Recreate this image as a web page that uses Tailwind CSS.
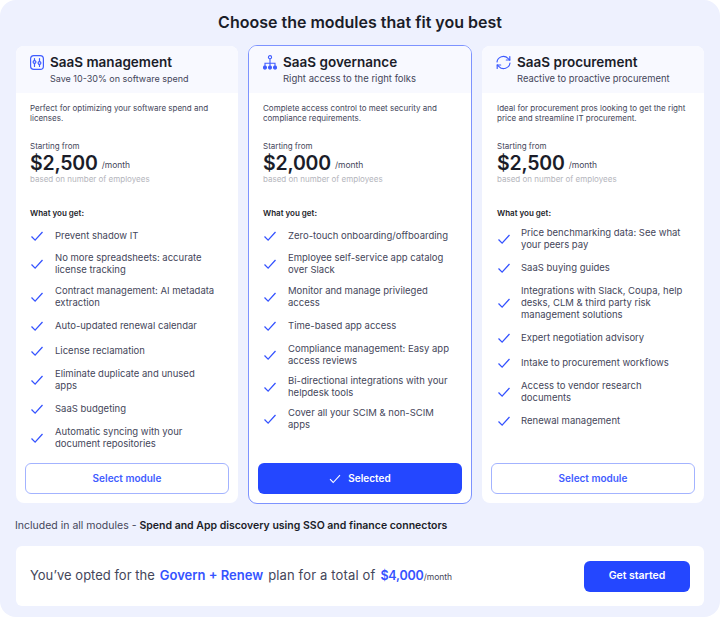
<!DOCTYPE html>
<html lang="en">
<head>
    <meta charset="UTF-8">
    <title>Choose the modules</title>
    <script src="https://cdn.jsdelivr.net/npm/@tailwindcss/browser@4"></script>
</head>
<body class="bg-white font-['Inter',sans-serif] text-[#1b1d29]">
    <div class="w-[720px] h-[617px] bg-[#eef1fe] rounded-[16px] px-4 overflow-hidden">
        <h1 class="h-[46px] pt-[12px] text-center text-[16px] leading-[20px] font-semibold">Choose the modules that fit you best</h1>

        <div class="grid grid-cols-[222px_222px_222px] gap-[11px] h-[457px]">
            <!-- SaaS management -->
            <div class="flex flex-col bg-white rounded-[8px] overflow-hidden">
                <div class="h-[47px] bg-[#f8f9ff] pl-[14px] pt-[9px]">
                    <div class="flex items-center gap-[6px] h-[15px]">
                        <svg class="w-[14px] h-[15px] shrink-0" viewBox="0 0 14 15" fill="none" stroke="#3f5cff" stroke-width="1.2" stroke-linecap="round">
                            <rect x="0.6" y="0.6" width="12.8" height="13.8" rx="3.2"/>
                            <path d="M4.5 3.5v2M4.5 8.5v3M9.5 3.5v3M9.5 9.5v2"/>
                            <circle cx="4.5" cy="7" r="1.4"/>
                            <circle cx="9.5" cy="8" r="1.4"/>
                        </svg>
                        <span class="text-[13.5px] leading-[15px] font-semibold">SaaS management</span>
                    </div>
                    <p class="ml-[20px] mt-[3px] text-[9px] leading-[12px] text-[#44465a]">Save 10-30% on software spend</p>
                </div>
                <div class="flex flex-col flex-1 px-[14px] pb-[9px]">
                    <p class="mt-[10px] text-[8px] leading-[10px] text-[#44465a]">Perfect for optimizing your software spend and licenses.</p>
                    <p class="mt-[18px] text-[8px] leading-[10px] text-[#44465a]">Starting from</p>
                    <p class="flex items-center gap-[4px] h-[24px] leading-[24px]"><span class="text-[19.5px] font-semibold tracking-[-0.2px]">$2,500</span><span class="pt-[4px] text-[8.5px] text-[#44465a]">/month</span></p>
                    <p class="-mt-[1px] text-[8px] leading-[10px] text-[#b4b5bc]">based on number of employees</p>
                    <p class="mt-[24px] text-[8px] leading-[10px] font-semibold">What you get:</p>
                    <ul class="mt-[9px] flex flex-col gap-[8.4px] text-[9.5px] leading-[12px] text-[#44465a]">
                        <li class="flex items-center gap-[11px] min-h-[17px]"><svg class="w-[14px] h-[12px] shrink-0" viewBox="0 0 14 12" fill="none" stroke="#3553ff" stroke-width="1.3"><path d="M1.5 6.5l3.6 3.6L12.5 2"/></svg><span>Prevent shadow IT</span></li>
                        <li class="flex items-center gap-[11px] min-h-[17px]"><svg class="w-[14px] h-[12px] shrink-0" viewBox="0 0 14 12" fill="none" stroke="#3553ff" stroke-width="1.3"><path d="M1.5 6.5l3.6 3.6L12.5 2"/></svg><span>No more spreadsheets: accurate license tracking</span></li>
                        <li class="flex items-center gap-[11px] min-h-[17px]"><svg class="w-[14px] h-[12px] shrink-0" viewBox="0 0 14 12" fill="none" stroke="#3553ff" stroke-width="1.3"><path d="M1.5 6.5l3.6 3.6L12.5 2"/></svg><span>Contract management: AI metadata extraction</span></li>
                        <li class="flex items-center gap-[11px] min-h-[17px]"><svg class="w-[14px] h-[12px] shrink-0" viewBox="0 0 14 12" fill="none" stroke="#3553ff" stroke-width="1.3"><path d="M1.5 6.5l3.6 3.6L12.5 2"/></svg><span>Auto-updated renewal calendar</span></li>
                        <li class="flex items-center gap-[11px] min-h-[17px]"><svg class="w-[14px] h-[12px] shrink-0" viewBox="0 0 14 12" fill="none" stroke="#3553ff" stroke-width="1.3"><path d="M1.5 6.5l3.6 3.6L12.5 2"/></svg><span>License reclamation</span></li>
                        <li class="flex items-center gap-[11px] min-h-[17px]"><svg class="w-[14px] h-[12px] shrink-0" viewBox="0 0 14 12" fill="none" stroke="#3553ff" stroke-width="1.3"><path d="M1.5 6.5l3.6 3.6L12.5 2"/></svg><span>Eliminate duplicate and unused<br>apps</span></li>
                        <li class="flex items-center gap-[11px] min-h-[17px]"><svg class="w-[14px] h-[12px] shrink-0" viewBox="0 0 14 12" fill="none" stroke="#3553ff" stroke-width="1.3"><path d="M1.5 6.5l3.6 3.6L12.5 2"/></svg><span>SaaS budgeting</span></li>
                        <li class="flex items-center gap-[11px] min-h-[17px]"><svg class="w-[14px] h-[12px] shrink-0" viewBox="0 0 14 12" fill="none" stroke="#3553ff" stroke-width="1.3"><path d="M1.5 6.5l3.6 3.6L12.5 2"/></svg><span>Automatic syncing with your document repositories</span></li>
                    </ul>
                    <button class="mt-auto h-[31px] -mx-[5px] rounded-[6px] border-[1.5px] border-[#a3b3ff] bg-white text-[10px] font-semibold text-[#3f5cff]">Select module</button>
                </div>
            </div>

            <!-- SaaS governance (selected) -->
            <div class="flex flex-col bg-white rounded-[9px] overflow-hidden border border-[#7d93ff] -m-px">
                <div class="h-[47px] bg-[#f8f9ff] pl-[14px] pt-[9px]">
                    <div class="flex items-center gap-[6px] h-[15px]">
                        <svg class="w-[14px] h-[15px] shrink-0" viewBox="0 0 14 15" fill="none" stroke="#3f5cff" stroke-width="1.1">
                            <circle cx="7" cy="2.2" r="1.6"/>
                            <path d="M7 4v8M2 12V8.2h10V12"/>
                            <circle cx="2" cy="12.6" r="1.5" fill="#3f5cff"/>
                            <circle cx="7" cy="12.6" r="1.5" fill="#3f5cff"/>
                            <circle cx="12" cy="12.6" r="1.5" fill="#3f5cff"/>
                        </svg>
                        <span class="text-[13.5px] leading-[15px] font-semibold">SaaS governance</span>
                    </div>
                    <p class="ml-[20px] mt-[3px] text-[9.5px] leading-[12px] text-[#44465a]">Right access to the right folks</p>
                </div>
                <div class="flex flex-col flex-1 px-[14px] pb-[9px]">
                    <p class="mt-[10px] text-[8px] leading-[10px] text-[#44465a]">Complete access control to meet security and compliance requirements.</p>
                    <p class="mt-[18px] text-[8px] leading-[10px] text-[#44465a]">Starting from</p>
                    <p class="flex items-center gap-[4px] h-[24px] leading-[24px]"><span class="text-[19.5px] font-semibold tracking-[-0.2px]">$2,000</span><span class="pt-[4px] text-[8.5px] text-[#44465a]">/month</span></p>
                    <p class="-mt-[1px] text-[8px] leading-[10px] text-[#b4b5bc]">based on number of employees</p>
                    <p class="mt-[24px] text-[8px] leading-[10px] font-semibold">What you get:</p>
                    <ul class="mt-[9px] flex flex-col gap-[8.4px] text-[9.5px] leading-[12px] text-[#44465a]">
                        <li class="flex items-center gap-[11px] min-h-[17px]"><svg class="w-[14px] h-[12px] shrink-0" viewBox="0 0 14 12" fill="none" stroke="#3553ff" stroke-width="1.3"><path d="M1.5 6.5l3.6 3.6L12.5 2"/></svg><span>Zero-touch onboarding/offboarding</span></li>
                        <li class="flex items-center gap-[11px] min-h-[17px]"><svg class="w-[14px] h-[12px] shrink-0" viewBox="0 0 14 12" fill="none" stroke="#3553ff" stroke-width="1.3"><path d="M1.5 6.5l3.6 3.6L12.5 2"/></svg><span>Employee self-service app catalog over Slack</span></li>
                        <li class="flex items-center gap-[11px] min-h-[17px]"><svg class="w-[14px] h-[12px] shrink-0" viewBox="0 0 14 12" fill="none" stroke="#3553ff" stroke-width="1.3"><path d="M1.5 6.5l3.6 3.6L12.5 2"/></svg><span>Monitor and manage privileged access</span></li>
                        <li class="flex items-center gap-[11px] min-h-[17px]"><svg class="w-[14px] h-[12px] shrink-0" viewBox="0 0 14 12" fill="none" stroke="#3553ff" stroke-width="1.3"><path d="M1.5 6.5l3.6 3.6L12.5 2"/></svg><span>Time-based app access</span></li>
                        <li class="flex items-center gap-[11px] min-h-[17px]"><svg class="w-[14px] h-[12px] shrink-0" viewBox="0 0 14 12" fill="none" stroke="#3553ff" stroke-width="1.3"><path d="M1.5 6.5l3.6 3.6L12.5 2"/></svg><span>Compliance management: Easy app access reviews</span></li>
                        <li class="flex items-center gap-[11px] min-h-[17px]"><svg class="w-[14px] h-[12px] shrink-0" viewBox="0 0 14 12" fill="none" stroke="#3553ff" stroke-width="1.3"><path d="M1.5 6.5l3.6 3.6L12.5 2"/></svg><span>Bi-directional integrations with your helpdesk tools</span></li>
                        <li class="flex items-center gap-[11px] min-h-[17px]"><svg class="w-[14px] h-[12px] shrink-0" viewBox="0 0 14 12" fill="none" stroke="#3553ff" stroke-width="1.3"><path d="M1.5 6.5l3.6 3.6L12.5 2"/></svg><span>Cover all your SCIM &amp; non-SCIM apps</span></li>
                    </ul>
                    <button class="mt-auto h-[31px] -mx-[5px] rounded-[6px] bg-[#2447ff] text-[10px] font-semibold text-white flex items-center justify-center gap-[7px]"><svg class="w-[12px] h-[10px]" viewBox="0 0 12 10" fill="none" stroke="#fff" stroke-width="1.1"><path d="M1 5.2l3.2 3.3L11 1.2"/></svg>Selected</button>
                </div>
            </div>

            <!-- SaaS procurement -->
            <div class="flex flex-col bg-white rounded-[8px] overflow-hidden">
                <div class="h-[47px] bg-[#f8f9ff] pl-[14px] pt-[9px]">
                    <div class="flex items-center gap-[6px] h-[15px]">
                        <svg class="w-[15px] h-[15px] shrink-0" viewBox="0 0 15 15" fill="none" stroke="#3f5cff" stroke-width="1.2" stroke-linecap="round" stroke-linejoin="round">
                            <path d="M1 7a6.4 6.4 0 0 1 11-3.6L13.7 5"/>
                            <path d="M13.8 1.5V5h-3.5"/>
                            <path d="M14 8a6.4 6.4 0 0 1-11 3.6L1.3 10"/>
                            <path d="M1.2 13.5V10h3.5"/>
                        </svg>
                        <span class="text-[13.5px] leading-[15px] font-semibold">SaaS procurement</span>
                    </div>
                    <p class="ml-[21px] mt-[3px] text-[9.4px] leading-[12px] text-[#44465a]">Reactive to proactive procurement</p>
                </div>
                <div class="flex flex-col flex-1 pl-[15px] pr-[14px] pb-[9px]">
                    <p class="mt-[10px] text-[8px] leading-[10px] text-[#44465a]">Ideal for procurement pros looking to get the right price and streamline IT procurement.</p>
                    <p class="mt-[18px] text-[8px] leading-[10px] text-[#44465a]">Starting from</p>
                    <p class="flex items-center gap-[4px] h-[24px] leading-[24px]"><span class="text-[19.5px] font-semibold tracking-[-0.2px]">$2,500</span><span class="pt-[4px] text-[8.5px] text-[#44465a]">/month</span></p>
                    <p class="-mt-[1px] text-[8px] leading-[10px] text-[#b4b5bc]">based on number of employees</p>
                    <p class="mt-[24px] text-[8px] leading-[10px] font-semibold">What you get:</p>
                    <ul class="mt-[9px] flex flex-col gap-[8.4px] text-[9.5px] leading-[12px] text-[#44465a]">
                        <li class="flex items-center gap-[10px] min-h-[17px]"><svg class="w-[14px] h-[12px] shrink-0" viewBox="0 0 14 12" fill="none" stroke="#3553ff" stroke-width="1.3"><path d="M1.5 6.5l3.6 3.6L12.5 2"/></svg><span>Price benchmarking data: See what your peers pay</span></li>
                        <li class="flex items-center gap-[10px] min-h-[17px]"><svg class="w-[14px] h-[12px] shrink-0" viewBox="0 0 14 12" fill="none" stroke="#3553ff" stroke-width="1.3"><path d="M1.5 6.5l3.6 3.6L12.5 2"/></svg><span>SaaS buying guides</span></li>
                        <li class="flex items-center gap-[10px] min-h-[17px]"><svg class="w-[14px] h-[12px] shrink-0" viewBox="0 0 14 12" fill="none" stroke="#3553ff" stroke-width="1.3"><path d="M1.5 6.5l3.6 3.6L12.5 2"/></svg><span>Integrations with Slack, Coupa, help desks, CLM &amp; third party risk management solutions</span></li>
                        <li class="flex items-center gap-[10px] min-h-[17px]"><svg class="w-[14px] h-[12px] shrink-0" viewBox="0 0 14 12" fill="none" stroke="#3553ff" stroke-width="1.3"><path d="M1.5 6.5l3.6 3.6L12.5 2"/></svg><span>Expert negotiation advisory</span></li>
                        <li class="flex items-center gap-[10px] min-h-[17px]"><svg class="w-[14px] h-[12px] shrink-0" viewBox="0 0 14 12" fill="none" stroke="#3553ff" stroke-width="1.3"><path d="M1.5 6.5l3.6 3.6L12.5 2"/></svg><span>Intake to procurement workflows</span></li>
                        <li class="flex items-center gap-[10px] min-h-[17px]"><svg class="w-[14px] h-[12px] shrink-0" viewBox="0 0 14 12" fill="none" stroke="#3553ff" stroke-width="1.3"><path d="M1.5 6.5l3.6 3.6L12.5 2"/></svg><span>Access to vendor research documents</span></li>
                        <li class="flex items-center gap-[10px] min-h-[17px]"><svg class="w-[14px] h-[12px] shrink-0" viewBox="0 0 14 12" fill="none" stroke="#3553ff" stroke-width="1.3"><path d="M1.5 6.5l3.6 3.6L12.5 2"/></svg><span>Renewal management</span></li>
                    </ul>
                    <button class="mt-auto h-[31px] -ml-[6px] -mr-[5px] rounded-[6px] border-[1.5px] border-[#a3b3ff] bg-white text-[10px] font-semibold text-[#3f5cff]">Select module</button>
                </div>
            </div>
        </div>

        <p class="mt-[16px] -ml-px h-[13px] text-[10.5px] leading-[13px] text-[#44465a]">Included in all modules - <span class="font-semibold text-[#1b1d29]">Spend and App discovery using SSO and finance connectors</span></p>

        <div class="mt-[14px] h-[60px] bg-white rounded-[6px] flex items-center justify-between px-[14px]">
            <p class="flex items-baseline text-[13px] text-[#44465a]">
                <span>You’ve opted for the</span>
                <span class="ml-[5px] font-semibold text-[#3553ff]">Govern + Renew</span>
                <span class="ml-[5px] tracking-[0.15px]">plan for a total of</span>
                <span class="ml-[5px] text-[12.5px] tracking-[-0.2px] font-semibold text-[#3553ff]">$4,000</span>
                <span class="text-[8.5px]">/month</span>
            </p>
            <button class="w-[106px] h-[31px] rounded-[6px] bg-[#2447ff] text-[10.5px] font-semibold text-white">Get started</button>
        </div>
    </div>
</body>
</html>
